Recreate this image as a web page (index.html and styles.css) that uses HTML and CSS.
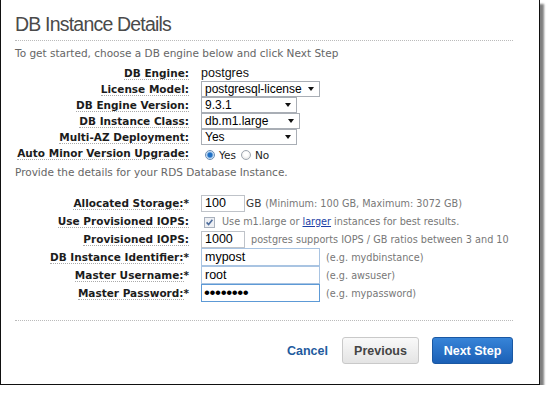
FILE: index.html
```html
<!DOCTYPE html>
<html lang="en">
<head>
<meta charset="UTF-8" />
<title>DB Instance Details</title>
<link rel="stylesheet" href="styles.css">
</head>
<body>
  <div class="window">
    <div class="panel">
      <h1 class="title">DB Instance Details</h1>
      <p class="intro">To get started, choose a DB engine below and click Next Step</p>

      <div class="form engine-form">
        <span class="label"><span class="term">DB Engine:</span></span>
        <span class="value plain">postgres</span>

        <span class="label"><span class="term">License Model:</span></span>
        <span class="value"><span class="select w-license"><select><option>postgresql-license</option></select></span></span>

        <span class="label"><span class="term">DB Engine Version:</span></span>
        <span class="value"><span class="select w-version"><select><option>9.3.1</option></select></span></span>

        <span class="label"><span class="term">DB Instance Class:</span></span>
        <span class="value"><span class="select w-class"><select><option>db.m1.large</option></select></span></span>

        <span class="label"><span class="term">Multi-AZ Deployment:</span></span>
        <span class="value"><span class="select w-version"><select><option>Yes</option></select></span></span>

        <span class="label"><span class="term">Auto Minor Version Upgrade:</span></span>
        <span class="value radios">
          <input class="radio" type="radio" name="upgrade" checked> <span class="radio-text">Yes</span>
          <input class="radio" type="radio" name="upgrade"> <span class="radio-text">No</span>
        </span>
      </div>

      <p class="intro intro-details">Provide the details for your RDS Database Instance.</p>

      <div class="form details-form">
        <span class="label"><span class="term">Allocated Storage:</span>*</span>
        <span class="value"><input class="field field-sm" value="100"><span class="unit">GB</span><span class="hint">(Minimum: 100 GB, Maximum: 3072 GB)</span></span>

        <span class="label"><span class="term">Use Provisioned IOPS:</span></span>
        <span class="value">
          <span class="checkbox" role="checkbox" aria-checked="true">
            <svg viewBox="0 0 11 11" width="11" height="11"><rect x="0.5" y="0.5" width="10" height="10" fill="#eef0f4" stroke="#a9b1bd"/><path d="M2.6 5.4 L4.6 7.6 L8.4 2.8" fill="none" stroke="#4d6c9c" stroke-width="1.6"/></svg>
          </span>
          <span class="hint hint-check">Use m1.large or <a class="link" href="#">larger</a> instances for best results.</span>
        </span>

        <span class="label"><span class="term">Provisioned IOPS:</span></span>
        <span class="value"><input class="field field-sm" value="1000"><span class="hint hint-iops">postgres supports IOPS / GB ratios between 3 and 10</span></span>

        <span class="label"><span class="term">DB Instance Identifier:</span>*</span>
        <span class="value"><input class="field field-md" value="mypost"><span class="hint hint-eg">(e.g. mydbinstance)</span></span>

        <span class="label"><span class="term">Master Username:</span>*</span>
        <span class="value"><input class="field field-md" value="root"><span class="hint hint-eg">(e.g. awsuser)</span></span>

        <span class="label"><span class="term">Master Password:</span>*</span>
        <span class="value"><input class="field field-md focused" type="password" value="mypostgr"><span class="hint hint-eg">(e.g. mypassword)</span></span>
      </div>

      <div class="actions">
        <a class="cancel" href="#">Cancel</a>
        <button class="btn btn-secondary">Previous</button>
        <button class="btn btn-primary">Next Step</button>
      </div>
    </div>
  </div>
</body>
</html>
```

FILE: styles.css
```css
* {
  box-sizing: border-box;
}

body {
  margin: 0;
  background: #fff;
  font-family: "DejaVu Sans", Verdana, sans-serif;
  font-size: 10.5px;
  color: #222;
}

.window {
  width: 540px;
  height: 385px;
  background: #fff;
  border: 1px solid #111;
  border-top: 0;
  box-shadow: 4px 4px 2px rgba(0,0,0,0.5);
}
.panel {
  padding: 12px 26px 0 14px;
}

.title {
  margin: 0;
  padding-bottom: 4px;
  font-family: "Liberation Sans", Arial, sans-serif;
  font-size: 19.5px;
  font-weight: normal;
  letter-spacing: -0.8px;
  line-height: 24px;
  color: #4a4a4a;
  border-bottom: 1px dotted #bbb;
}

.intro {
  margin: 5px 0 0;
  line-height: 14px;
  color: #666;
}
.intro-details {
  margin-top: 3px;
}

/* две колонки: подпись справа, значение слева */
.form {
  display: grid;
  grid-template-columns: 174px 1fr;
  column-gap: 12px;
}
.engine-form {
  margin-top: 6px;
  grid-template-rows: 15px repeat(4, 16px) 17px;
}
.details-form {
  margin-top: 15px;
  grid-auto-rows: 18px;
}

.label {
  align-self: center;
  text-align: right;
  white-space: nowrap;
  font-weight: bold;
  line-height: 15px;
  color: #1c1c1c;
}
.term {
  border-bottom: 1px dotted #aaa;
}

.value {
  justify-self: start;
  align-self: center;
  display: flex;
  align-items: center;
  white-space: nowrap;
}
.plain {
  font-family: "Liberation Sans", Arial, sans-serif;
  font-size: 12.5px;
  line-height: 15px;
  color: #111;
}

.select {
  position: relative;
  display: block;
  height: 16px;
}
.select select {
  appearance: none;
  -webkit-appearance: none;
  width: 100%;
  height: 16px;
  margin: 0;
  padding: 0 12px 0 3px;
  border: 1px solid #a9aeb5;
  border-radius: 0;
  background: #fff;
  font-family: "Liberation Sans", Arial, sans-serif;
  font-size: 12px;
  line-height: 14px;
  color: #000;
}
.select::after {
  content: "";
  position: absolute;
  right: 6px;
  top: 6px;
  border-left: 3.5px solid transparent;
  border-right: 3.5px solid transparent;
  border-top: 4px solid #111;
  pointer-events: none;
}
.w-license { width: 119px; }
.w-version { width: 96px; }
.w-class { width: 99px; }

.radios {
  padding-left: 4px;
  padding-top: 2px;
}
.radio {
  appearance: none;
  -webkit-appearance: none;
  width: 10px;
  height: 10px;
  margin: 0 4px 0 0;
  border: 1px solid #9ea6b0;
  border-radius: 50%;
  background: radial-gradient(circle at 50% 40%, #fff 30%, #dcdcdc 100%);
}
.radio:checked {
  border-color: #6b8db2;
  background: radial-gradient(circle, #1f6fc4 0 2px, #7fb1e3 2.8px, #e9f1fa 4px);
}
.radio-text {
  margin-right: 5px;
  color: #1c1c1c;
}

.field {
  height: 17px;
  margin: 0;
  padding: 0 3px;
  border: 1px solid #bfc3c9;
  border-radius: 0;
  font-family: "Liberation Sans", Arial, sans-serif;
  font-size: 12.5px;
  color: #000;
  outline: none;
}
.field-sm { width: 44px; }
.field-md {
  width: 119px;
  height: 18px;
  border-color: #a9c4e2;
}
.field.focused {
  border-color: #5d9ad6;
  padding-left: 2px;
  font-size: 17px;
  letter-spacing: -0.4px;
}

.unit {
  margin-left: 1px;
  color: #333;
}
.hint {
  margin-left: 4px;
  font-size: 9.7px;
  color: #777;
}
.hint-iops,
.hint-eg {
  margin-left: 6px;
}
.hint-check {
  margin-left: 7px;
}
.checkbox {
  display: flex;
  margin-left: 3px;
  margin-top: 2px;
}
.link {
  color: #1b3fa6;
  text-decoration: underline;
}

/* кнопки внизу */
.actions {
  display: flex;
  justify-content: flex-end;
  align-items: center;
  gap: 13px;
  margin-top: 18px;
  padding-top: 16px;
  border-top: 1px dotted #bbb;
}
.cancel {
  margin-right: 1px;
  font-family: "Liberation Sans", Arial, sans-serif;
  font-size: 12.5px;
  font-weight: bold;
  color: #1f5b9e;
  text-decoration: none;
}
.btn {
  height: 27px;
  padding: 0;
  border-radius: 3px;
  font-family: "Liberation Sans", Arial, sans-serif;
  font-size: 12.5px;
  font-weight: bold;
  cursor: pointer;
}
.btn-secondary {
  width: 77px;
  background: linear-gradient(#f9f9f9, #e4e4e4);
  border: 1px solid #c9c9c9;
  color: #444;
}
.btn-primary {
  width: 81px;
  background: linear-gradient(#3784d8, #1b60b6);
  border: 1px solid #1a58a3;
  color: #fff;
}
```
